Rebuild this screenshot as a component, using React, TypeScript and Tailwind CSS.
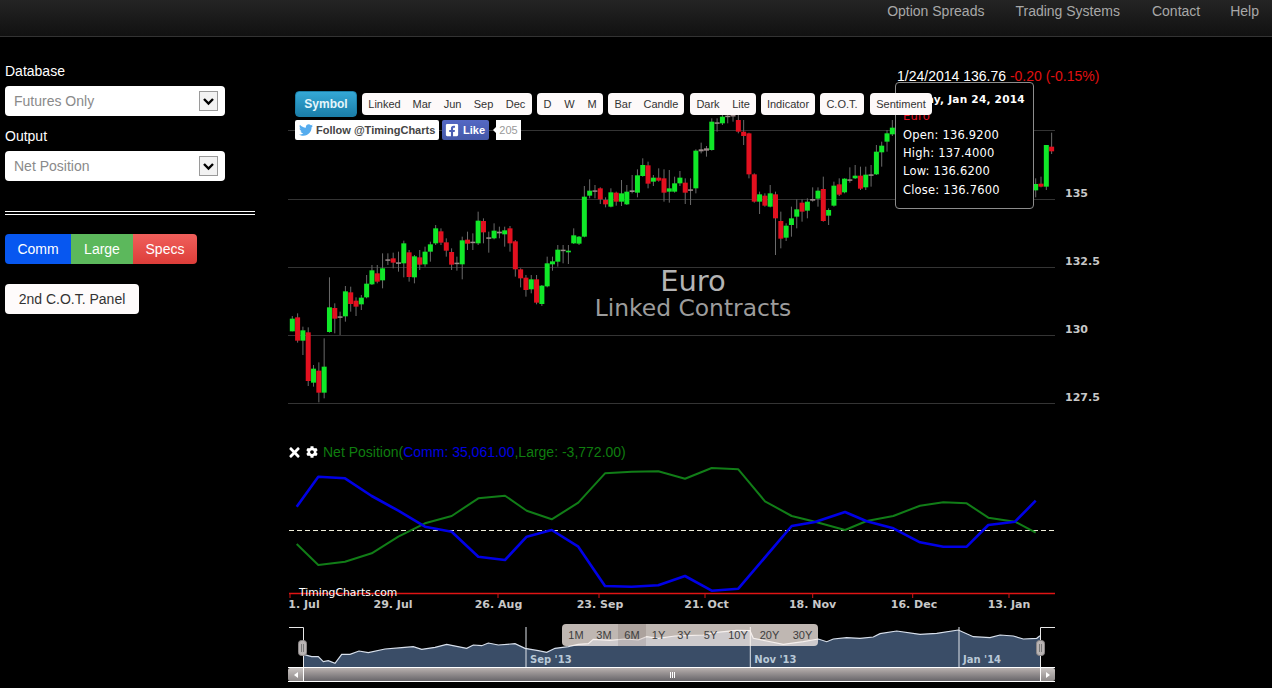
import React from "react";
import { FaTimes, FaCog, FaTwitter, FaFacebookSquare } from "react-icons/fa";

type C = [number, number, number, number, string];

const A: C[] = [
  [356,394,348,394,"g"],[352,422,340,428,"r"],[391,422,380,465,"g"],[397,543,382,558,"r"],[506,548,495,560,"g"],[512,578,487,607,"r"],[500,578,415,595,"g"],[322,396,232,398,"g"],[324,356,310,400,"r"],[349,352,335,405,"d"],
  [274,349,258,365,"g"],[277,312,260,335,"r"],[302,320,292,348,"r"],[293,313,285,330,"g"],[251,292,225,295,"g"],[211,253,195,255,"g"],[220,245,195,250,"r"],[205,241,160,265,"g"],[178,181,160,195,"d"],[175,188,158,205,"r"],
  [187,190,155,215,"d"],[130,190,122,232,"g"],[157,231,150,245,"r"],[169,232,165,250,"g"],[172,194,150,210,"r"],[155,193,140,200,"g"],[133,155,125,185,"g"],[85,130,75,135,"g"],[94,128,85,135,"r"],[127,152,115,170,"r"],
  [156,194,145,210,"r"],[188,192,170,212,"d"],[121,193,110,238,"g"],[119,131,95,150,"r"],[125,129,100,150,"d"],[62,130,35,135,"g"],[63,97,55,130,"r"],[112,115,95,158,"d"],[92,115,70,118,"g"],[95,100,80,115,"d"],
  [91,103,80,140,"g"],[85,130,78,155,"r"],[124,208,120,230,"r"],[208,235,205,262,"r"],[233,270,225,290,"r"],[238,268,225,280,"g"],[238,308,225,313,"r"],[257,312,255,318,"g"],[190,259,170,262,"g"],[184,193,170,212,"g"],
  [149,185,135,200,"g"],[149,153,135,190,"d"],[152,157,135,192,"g"],
];
const B: C[] = [
  [376,400,355,402,"g"],[380,401,378,405,"g"],[260,380,228,382,"g"],[242,257,208,265,"g"],[241,245,225,265,"d"],[235,268,232,282,"r"],[270,283,262,292,"r"],[247,290,235,292,"g"],[248,275,245,287,"r"],[250,275,210,288,"g"],
  [245,283,225,285,"g"],[241,246,195,250,"d"],[196,248,178,262,"g"],[165,198,145,200,"g"],[166,221,155,235,"r"],[203,215,195,228,"g"],[203,212,175,215,"r"],[205,248,178,275,"r"],[235,245,180,278,"g"],[220,245,200,248,"g"],
  [203,220,183,228,"g"],[218,248,205,282,"r"],[238,241,205,285,"d"],[122,235,118,250,"g"],[118,124,98,130,"d"],[115,122,108,140,"d"],[35,120,25,122,"g"],[37,40,25,65,"d"],[20,40,15,45,"g"],[17,21,15,40,"d"],
  [15,17,12,35,"d"],[30,65,12,70,"r"],[65,78,30,105,"r"],[70,193,68,205,"r"],[193,275,190,278,"r"],[253,275,245,312,"g"],[257,287,250,290,"r"],[250,290,225,292,"g"],[253,325,245,435,"r"],[333,386,305,415,"r"],
  [347,383,340,393,"g"],[325,345,290,380,"g"],[298,320,268,355,"g"],[278,305,268,335,"r"],[275,302,265,325,"g"],[267,272,232,275,"d"],[242,266,232,290,"g"],[237,333,200,335,"r"],[300,317,295,345,"g"],
];
const D: C[] = [
  [227,287,215,290,"g"],[223,254,205,258,"r"],[206,247,205,250,"g"],[208,212,172,218,"d"],[197,205,165,207,"g"],[197,236,170,240,"r"],[194,232,170,240,"g"],[193,196,165,230,"d"],[125,193,105,195,"g"],[107,127,95,170,"g"],
  [70,95,60,125,"g"],[53,73,30,78,"g"],
];
const E: C[] = [[222,241,205,262,"g"],[221,230,200,232,"r"],[105,230,105,240,"g"],[110,124,68,132,"r"]];

const candles = [
  ...A.map((c, i) => ({ c, i: i, o: 200 })),
  ...B.map((c, i) => ({ c, i: 53 + i, o: 110 })),
  ...D.map((c, i) => ({ c, i: 102 + i, o: 110 })),
  ...E.map((c, i) => ({ c, i: 140 + i, o: 110 })),
];

const fillOf: Record<string, string> = { g: "#10e828", r: "#e2101f", d: "#9c8a8a" };

const zp = (pts: number[][], ox: number, oy: number) =>
  pts.map(([x, y]) => `${(ox + x / 3).toFixed(1)},${(oy + y / 3).toFixed(1)}`).join(" ");

const blue =
  zp([[35,200],[100,110],[180,115],[260,168],[340,212],[420,260],[500,275],[580,350],[660,360],[725,290],[800,270],[880,320],[960,438],[1040,440],[1120,436],[1200,408]], 285, 440) +
  " " +
  zp([[45,408],[125,452],[205,446],[365,258],[435,246],[525,216],[590,244],[670,265],[750,307],[820,320],[890,320],[955,255],[1035,245],[1097,182]], 670, 440);
const green =
  zp([[35,312],[100,375],[180,365],[260,340],[340,290],[420,250],[500,228],[580,175],[660,167],[725,212],[800,238],[880,188],[960,100],[1040,95],[1120,94],[1200,116]], 285, 440) +
  " " +
  zp([[45,116],[125,84],[205,88],[285,184],[365,228],[435,245],[525,270],[590,243],[670,228],[750,197],[820,187],[890,190],[955,233],[1035,245],[1097,278]], 670, 440);

const navLine =
  zp([[55,118],[80,125],[100,125],[115,140],[130,137],[150,145],[170,118],[195,118],[222,108],[250,113],[300,102],[350,98],[385,95],[410,103],[450,97],[485,88],[545,100],[565,90],[590,92],[610,84],[640,90],[690,86],[720,100],[760,107],[785,112],[810,100],[850,95],[880,88],[910,86],[925,73],[975,76],[1020,72],[1060,75],[1085,65],[1120,70],[1170,63]], 285, 615) +
  " " +
  zp([[50,62],[100,60],[140,52],[200,46],[240,47],[250,70],[290,78],[340,88],[400,80],[445,72],[470,80],[490,72],[530,68],[570,70],[610,66],[630,56],[680,48],[750,58],[800,55],[865,45],[910,65],[960,68],[990,60],[1030,63],[1060,72],[1100,70],[1110,62]], 670, 615);

const seg = "flex h-full items-center justify-center";

function Select({ value }: { value: string }) {
  return (
    <div className="flex h-[30px] w-[220px] items-center justify-between rounded-[4px] bg-white pl-[9px] pr-[7px] text-[14px] text-[#8a8a8a]">
      <span>{value}</span>
      <span className="flex h-[20px] w-[19px] items-center justify-center border border-[#9a9a9a] bg-[#f2f2f2]">
        <svg width="13" height="9" viewBox="0 0 13 9">
          <path d="M2 2 L6.5 6.5 L11 2" fill="none" stroke="#000" strokeWidth="2.4" />
        </svg>
      </span>
    </div>
  );
}

function Sidebar() {
  return (
    <aside className="w-[288px] shrink-0 pl-[5px] pt-[24px] text-white">
      <div className="text-[14px] leading-[20px]">Database</div>
      <div className="mt-[5px]">
        <Select value="Futures Only" />
      </div>
      <div className="mt-[10px] text-[14px] leading-[20px]">Output</div>
      <div className="mt-[5px]">
        <Select value="Net Position" />
      </div>
      <div className="mt-[30px] h-[4px] w-[250px] border-y border-white" />
      <div className="mt-[19px] flex h-[30px] w-[192px] text-[14px] text-white">
        <div className={seg + " w-[66px] rounded-l-[4px] bg-[#0757f0]"}>Comm</div>
        <div className={seg + " w-[62px] bg-[#5cb85c]"}>Large</div>
        <div className={seg + " w-[64px] rounded-r-[4px] bg-gradient-to-b from-[#f05f5b] to-[#dd3d39]"}>Specs</div>
      </div>
      <div className="mt-[20px] flex h-[30px] w-[134px] items-center justify-center rounded-[4px] bg-[#fefbfb] text-[14px] text-[#333]">
        2nd C.O.T. Panel
      </div>
    </aside>
  );
}

function Toolbar() {
  const btn = "flex h-[22px] items-center rounded-[4px] bg-[#fdf9f9] text-[11px] text-[#333]";
  return (
    <div className="absolute left-[7px] top-[54px] z-20">
      <div className="flex h-[26px] items-center gap-[5px]">
        <div className="flex h-[26px] w-[62px] items-center justify-center rounded-[4px] border border-[#1c7fa8] bg-gradient-to-b from-[#34a8d6] to-[#1b7ea9] text-[12px] font-bold text-[#e6f6fb]">
          Symbol
        </div>
        <div className={btn}>
          <span className={seg + " w-[45px]"}>Linked</span>
          <span className={seg + " w-[30px]"}>Mar</span>
          <span className={seg + " w-[31px]"}>Jun</span>
          <span className={seg + " w-[31px]"}>Sep</span>
          <span className={seg + " w-[33px]"}>Dec</span>
        </div>
        <div className={btn}>
          <span className={seg + " w-[21px]"}>D</span>
          <span className={seg + " w-[23px]"}>W</span>
          <span className={seg + " w-[22px]"}>M</span>
        </div>
        <div className={btn}>
          <span className={seg + " w-[30px]"}>Bar</span>
          <span className={seg + " w-[46px]"}>Candle</span>
        </div>
        <div className={btn + " ml-px"}>
          <span className={seg + " w-[36px]"}>Dark</span>
          <span className={seg + " w-[30px]"}>Lite</span>
        </div>
        <div className={btn + " w-[54px] justify-center"}>Indicator</div>
        <div className={btn + " w-[44px] justify-center"}>C.O.T.</div>
        <div className={btn + " ml-px w-[62px] justify-center"}>Sentiment</div>
      </div>
      <div className="mt-[3px] flex h-[20px] items-center text-[11px]">
        <div className="flex h-full w-[144px] items-center gap-[3px] rounded-[2px] bg-white pl-[4px] text-[#333]">
          <FaTwitter className="text-[#55acee]" size={14} />
          <span className="text-[11px] font-bold text-[#444]">Follow @TimingCharts</span>
        </div>
        <div className="ml-[3px] flex h-full w-[47px] items-center gap-[4px] rounded-[2px] bg-gradient-to-b from-[#5468c4] to-[#4458a8] pl-[3px] font-bold text-white">
          <FaFacebookSquare size={14} />
          <span>Like</span>
        </div>
        <div className="relative ml-[7px] flex h-full w-[25px] items-center justify-center bg-white text-[#999]">
          <span className="absolute left-[-3px] top-[7px] h-0 w-0 border-y-[3px] border-r-[3px] border-y-transparent border-r-white" />
          205
        </div>
      </div>
    </div>
  );
}

function Tooltip() {
  return (
    <div className="absolute left-[607px] top-[45px] z-10 h-[127px] w-[139px] rounded-[4px] border border-[#8c8c8c] bg-black pl-[7px] pt-[7px] font-['DejaVu_Sans',sans-serif] text-[11.5px] tracking-[0.2px] text-white">
      <div className="whitespace-nowrap text-[10.6px] font-bold leading-[18px]">Friday, Jan 24, 2014</div>
      <div className="leading-[17.5px] text-[#e01020]">Euro</div>
      <div className="leading-[18.4px]">Open: 136.9200</div>
      <div className="leading-[18.4px]">High: 137.4000</div>
      <div className="leading-[18.4px]">Low: 136.6200</div>
      <div className="leading-[18.4px]">Close: 136.7600</div>
    </div>
  );
}

function PriceChart() {
  const gl = [130, 199, 267, 335, 403];
  const labels: [string, number][] = [["135", 197], ["132.5", 265], ["130", 333], ["127.5", 401]];
  return (
    <div className="relative h-[405px] w-[984px]">
      <svg width="984" height="405" viewBox="288 37 984 405" className="block">
        {gl.map((y) => (
          <line key={y} x1="288" x2="1055" y1={y + 0.5} y2={y + 0.5} stroke="#343434" />
        ))}
        {candles.map(({ c, i, o }) => {
          const x = 292.3 + 5.31 * i;
          const top = o + c[0] / 3;
          const bot = o + c[1] / 3;
          return (
            <g key={i}>
              <line x1={x} x2={x} y1={o + c[2] / 3} y2={o + c[3] / 3} stroke="#6a6a6a" strokeWidth="1" />
              <rect x={x - 2.5} y={top} width="5" height={Math.max(bot - top, 1.5)} fill={fillOf[c[4]]} />
            </g>
          );
        })}
        {labels.map(([t, y]) => (
          <text key={t} x="1065" y={y} fill="#c8c8c8" fontSize="11" fontWeight="700" className="font-['DejaVu_Sans',sans-serif]">
            {t}
          </text>
        ))}
        <text x="693" y="291" textAnchor="middle" fill="#b4b4b4" fontSize="29" className="font-['DejaVu_Sans',sans-serif]">
          Euro
        </text>
        <text x="693" y="316" textAnchor="middle" fill="#9c9c9c" fontSize="23.4" className="font-['DejaVu_Sans',sans-serif]">
          Linked Contracts
        </text>
      </svg>
      <div className="absolute left-[609px] top-[31px] whitespace-nowrap text-[14px] leading-[16px] text-white">
        1/24/2014 136.76 <span className="text-[#e01010]">-0.20 (-0.15%)</span>
      </div>
      <Tooltip />
      <Toolbar />
    </div>
  );
}

function NetRow() {
  return (
    <div className="flex h-[20px] items-center text-[14px] text-[#0f7d0f]">
      <FaTimes className="-ml-[1.5px] text-white" size={15} />
      <FaCog className="ml-[4.5px] text-white" size={12} />
      <span className="ml-[5px] whitespace-nowrap">
        Net Position(<span className="text-[#0000e0]">Comm: 35,061.00</span>,Large: -3,772.00)
      </span>
    </div>
  );
}

function IndicatorChart() {
  const ticks = [290, 391.7, 498, 599, 705, 812.7, 912.7, 1009];
  const lbls: [string, number][] = [
    ["1. Jul", 304], ["29. Jul", 393], ["26. Aug", 498.5], ["23. Sep", 600], ["21. Oct", 706.5], ["18. Nov", 812.5], ["16. Dec", 914], ["13. Jan", 1009],
  ];
  return (
    <svg width="984" height="150" viewBox="288 462 984 150" className="block">
      <line x1="289" x2="1055" y1="530.5" y2="530.5" stroke="#efeeda" strokeDasharray="5 3" />
      <polyline points={green} fill="none" stroke="#117d17" strokeWidth="2" strokeLinejoin="round" />
      <polyline points={blue} fill="none" stroke="#0000e6" strokeWidth="2.6" strokeLinejoin="round" />
      <line x1="289" x2="1055" y1="593.5" y2="593.5" stroke="#e01414" strokeWidth="1.5" />
      {ticks.map((x) => (
        <line key={x} x1={x} x2={x} y1="593" y2="598" stroke="#d01515" />
      ))}
      {lbls.map(([t, x]) => (
        <text key={t} x={x} y="608" textAnchor="middle" fill="#c8c8c8" fontSize="11" fontWeight="700" className="font-['DejaVu_Sans',sans-serif]">
          {t}
        </text>
      ))}
      <text x="299" y="596" fill="#fff" fontSize="10.8" className="font-['DejaVu_Sans',sans-serif]">
        TimingCharts.com
      </text>
    </svg>
  );
}

function RangeSelector() {
  const items: [string, string, boolean][] = [
    ["1M", "w-[28px] rounded-l-[4px]", false],
    ["3M", "w-[28px]", false],
    ["6M", "w-[28px]", true],
    ["1Y", "w-[25px]", false],
    ["3Y", "w-[26px]", false],
    ["5Y", "w-[27px]", false],
    ["10Y", "w-[28px]", false],
    ["20Y", "w-[35px]", false],
    ["30Y", "w-[31px] rounded-r-[4px]", false],
  ];
  return (
    <div className="absolute left-[274px] top-[12px] flex h-[22px] text-[11px] text-[#3d3d3d]">
      {items.map(([t, w, active]) => (
        <span key={t} className={seg + " " + w + " " + (active ? "bg-[#e6d8d2]/75" : "bg-[#fff4ee]/75")}>
          {t}
        </span>
      ))}
    </div>
  );
}

function Navigator() {
  const area = `303,667 ${navLine} 1040,667`;
  const dates: [number, string][] = [[526, "Sep '13"], [750.3, "Nov '13"], [959, "Jan '14"]];
  return (
    <div className="relative w-[767px]">
      <svg width="767" height="55" viewBox="288 612 767 55" className="block">
        <polygon points={area} fill="#3a4d67" />
        <polyline points={navLine} fill="none" stroke="#d8e0ec" strokeWidth="1.2" />
        {dates.map(([x, t]) => (
          <g key={t}>
            <line x1={x} x2={x} y1="627" y2="667" stroke="#dfe4ea" />
            <text x={x + 4} y="663" fill="#b9c9d8" fontSize="10" fontWeight="700" className="font-['DejaVu_Sans',sans-serif]">
              {t}
            </text>
          </g>
        ))}
        <path d="M289 627.5 H303.5 V667 M1055 627.5 H1040.5 V667" fill="none" stroke="#e8e8e8" />
        <rect x="298.5" y="640.5" width="8" height="15" rx="3" fill="#b9b4b4" stroke="#8a8686" />
        <path d="M301.5 644 V652 M303.5 644 V652" stroke="#777" />
        <rect x="1036.5" y="640.5" width="8" height="15" rx="3" fill="#b9b4b4" stroke="#8a8686" />
        <path d="M1039.5 644 V652 M1041.5 644 V652" stroke="#777" />
      </svg>
      <RangeSelector />
      <div className="flex h-[15px] w-[767px] border-y border-white">
        <div className="flex w-[16px] items-center justify-center rounded-l-[2px] border-r border-white bg-gradient-to-b from-[#c9c4c2] to-[#8e8a8a]">
          <span className="h-0 w-0 border-y-[3px] border-r-[4px] border-y-transparent border-r-white" />
        </div>
        <div className="flex flex-1 items-center justify-center gap-[1px] bg-gradient-to-b from-[#b8b0ae] to-[#68666a]">
          <span className="h-[6px] w-px bg-white" />
          <span className="h-[6px] w-px bg-white" />
          <span className="h-[6px] w-px bg-white" />
        </div>
        <div className="flex w-[15px] items-center justify-center rounded-r-[2px] border-l border-white bg-gradient-to-b from-[#c9c4c2] to-[#8e8a8a]">
          <span className="h-0 w-0 border-y-[3px] border-l-[4px] border-y-transparent border-l-white" />
        </div>
      </div>
    </div>
  );
}

export default function App() {
  return (
    <div className="h-[688px] w-full overflow-hidden bg-black font-['Liberation_Sans',sans-serif]">
      <nav className="flex h-[37px] justify-end gap-[31px] border-b border-[#333] bg-gradient-to-b from-[#242424] to-[#111] pr-[13px] pt-[3px] text-[14px] leading-[17px] text-[#a8a8a8]">
        <span>Option Spreads</span>
        <span>Trading Systems</span>
        <span className="ml-px">Contact</span>
        <span className="-ml-px">Help</span>
      </nav>
      <div className="flex">
        <Sidebar />
        <main className="w-[984px]">
          <PriceChart />
          <NetRow />
          <IndicatorChart />
          <Navigator />
        </main>
      </div>
    </div>
  );
}
